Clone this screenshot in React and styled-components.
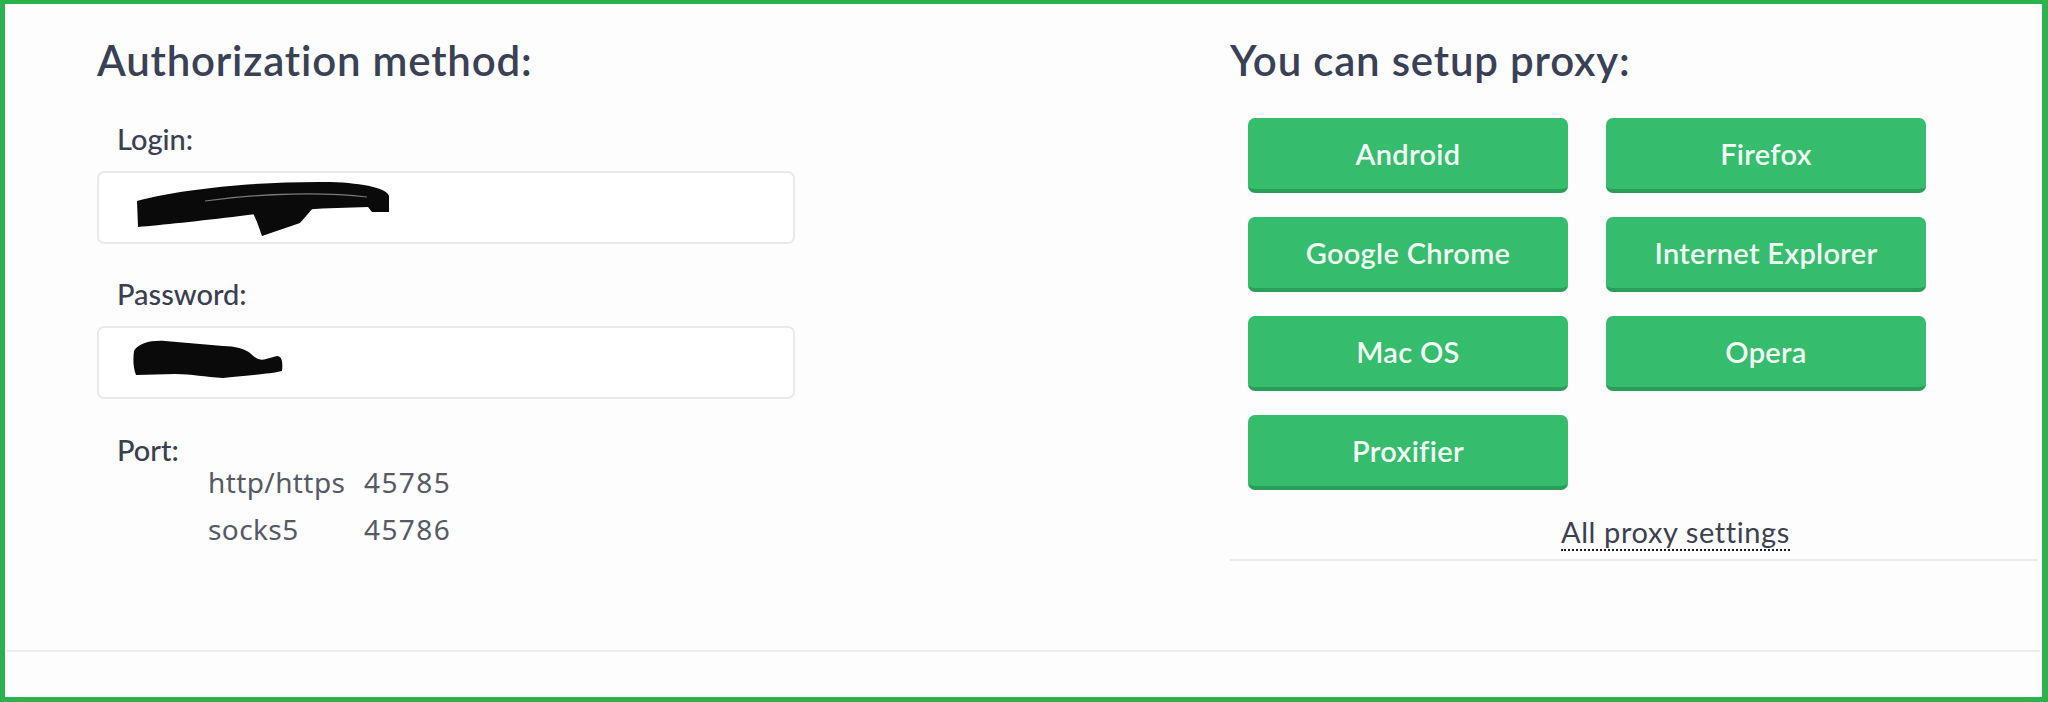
import React from 'react';
import styled, { createGlobalStyle } from 'styled-components';

const GlobalStyle = createGlobalStyle`
  html, body {
    margin: 0;
    padding: 0;
    background: #ffffff;
  }
  * {
    box-sizing: border-box;
  }
`;

const Page = styled.div`
  width: 2048px;
  height: 702px;
  border: 5px solid #2cb24d;
  border-top-width: 4px;
  border-right-width: 6px;
  background: #fdfdfd;
  display: flex;
  flex-direction: column;
  font-family: Lato, 'Liberation Sans', sans-serif;
`;

const Main = styled.div`
  display: flex;
  height: 646px;
`;

const LeftCol = styled.section`
  width: 1225px;
  padding: 32px 0 0 92px;
`;

const RightCol = styled.section`
  flex: 1;
  align-self: flex-start;
  margin-right: 4px;
  padding-top: 32px;
  border-bottom: 2px solid #ececec;
`;

const Heading = styled.h2`
  margin: 0;
  font-size: 42px;
  line-height: 48px;
  letter-spacing: 0.8px;
  font-weight: 600;
  color: #3a4055;
`;

const Label = styled.div`
  margin: ${p => p.$top}px 0 0 20px;
  font-size: 29px;
  line-height: ${p => p.$lh || 34}px;
  font-weight: 500;
  color: #3b4050;
`;

const InputBox = styled.div`
  margin-top: 15px;
  width: 698px;
  height: 73px;
  border: 2px solid #e9e9e9;
  border-radius: 7px;
  background: #ffffff;
  display: flex;
  align-items: flex-start;
  padding: ${p => p.$pt}px 0 0 ${p => p.$pl}px;
`;

const PortTable = styled.div`
  margin: 10px 0 0 111px;
  display: grid;
  grid-template-columns: 156px auto;
  row-gap: 23px;
  font-family: 'Noto Sans', 'Open Sans', sans-serif;
  font-size: 28px;
  line-height: 24px;
  letter-spacing: 0.4px;
  color: #565a66;
`;

const PortValue = styled.span`
  letter-spacing: 1.4px;
`;

const ButtonGrid = styled.div`
  margin: 34px 0 0 18px;
  display: grid;
  grid-template-columns: 320px 320px;
  grid-auto-rows: 75px;
  column-gap: 38px;
  row-gap: 24px;
`;

const ProxyButton = styled.button`
  border: none;
  border-bottom: 4px solid #2a9d59;
  border-radius: 7px;
  background: #36bc6d;
  color: #f1fff5;
  font-family: Lato, 'Liberation Sans', sans-serif;
  font-size: 29px;
  font-weight: 600;
  letter-spacing: 0.3px;
  display: flex;
  align-items: center;
  justify-content: center;
  padding: 0;
  cursor: pointer;
`;

const LinkRow = styled.div`
  margin-top: 25px;
  padding: 0 0 5px 331px;
  line-height: 34px;
`;

const DottedLink = styled.a`
  font-size: 29px;
  letter-spacing: 0.6px;
  color: #3c4150;
  text-decoration: none;
  border-bottom: 2px dotted #1e1e1e;
`;

const Divider = styled.div`
  height: 2px;
  margin: 0 2px;
  background: #ececec;
`;

const Footer = styled.div`
  flex: 1;
`;

function LoginScribble() {
  return (
    <svg width="258" height="56" viewBox="0 0 258 56">
      <path
        d="M2,20 C45,8 125,0 195,1 C230,2 253,8 254,15 L254,31 L237,31 L233,26 C185,27 140,30 105,35 C65,40 25,44 3,46 Z"
        fill="#0a0a0a"
      />
      <path d="M118,32 L178,27 L165,42 L127,55 L122,41 Z" fill="#0a0a0a" />
      <path d="M70,20 C125,12 190,11 232,16" stroke="#7a7a7a" strokeWidth="1.2" fill="none" />
    </svg>
  );
}

function PasswordScribble() {
  return (
    <svg width="156" height="44" viewBox="0 0 156 44">
      <path
        d="M4,14 C8,6 22,3 35,4 L93,9 C105,9 115,12 120,16 C126,22 131,24 136,22 L147,19 C152,19 153,25 152,34 C140,37 120,38 93,41 C75,40 62,37 45,37 L6,38 C3,30 3,22 4,14 Z"
        fill="#0a0a0a"
      />
    </svg>
  );
}

const buttons = [
  'Android',
  'Firefox',
  'Google Chrome',
  'Internet Explorer',
  'Mac OS',
  'Opera',
  'Proxifier',
];

export default function App() {
  return (
    <>
      <GlobalStyle />
      <Page>
        <Main>
          <LeftCol>
            <Heading>Authorization method:</Heading>
            <Label $top={38}>Login:</Label>
            <InputBox $pl={36} $pt={8}>
              <LoginScribble />
            </InputBox>
            <Label $top={33}>Password:</Label>
            <InputBox $pl={31} $pt={9}>
              <PasswordScribble />
            </InputBox>
            <Label $top={41} $lh={20}>Port:</Label>
            <PortTable>
              <span>http/https</span>
              <PortValue>45785</PortValue>
              <span>socks5</span>
              <PortValue>45786</PortValue>
            </PortTable>
          </LeftCol>
          <RightCol>
            <Heading>You can setup proxy:</Heading>
            <ButtonGrid>
              {buttons.map(name => (
                <ProxyButton key={name}>{name}</ProxyButton>
              ))}
            </ButtonGrid>
            <LinkRow>
              <DottedLink href="#">All proxy settings</DottedLink>
            </LinkRow>
          </RightCol>
        </Main>
        <Divider />
        <Footer />
      </Page>
    </>
  );
}
